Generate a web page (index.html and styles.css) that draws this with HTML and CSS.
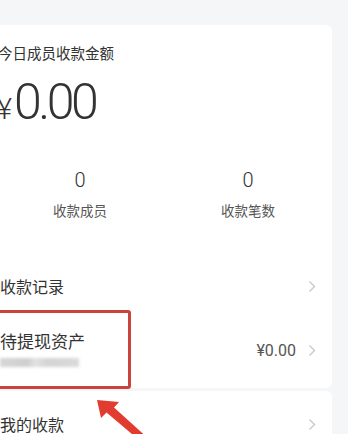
FILE: index.html
```html
<!DOCTYPE html>
<html lang="zh">
<head>
<meta charset="utf-8">
<link rel="stylesheet" href="styles.css">
</head>
<body>
<div class="page">
  <section class="card card-main">
    <div class="title">今日成员收款金额</div>
    <div class="amount"><span class="yen">¥</span><span class="num">0.00</span></div>
    <div class="stats">
      <div class="stat"><div class="stat-num">0</div><div class="stat-label">收款成员</div></div>
      <div class="stat"><div class="stat-num">0</div><div class="stat-label">收款笔数</div></div>
    </div>
    <div class="row row-record">
      <span class="row-label">收款记录</span>
      <svg class="chev" width="8" height="13" viewBox="0 0 8 13"><polyline points="1.5,1.5 6.5,6.5 1.5,11.5" fill="none" stroke="#c9c9c9" stroke-width="1.4"/></svg>
    </div>
    <div class="row row-asset">
      <div class="asset-left">
        <span class="asset-label">待提现资产</span>
        <span class="blur-bar"></span>
      </div>
      <div class="asset-right">
        <span class="asset-value">¥0.00</span>
        <svg class="chev" width="8" height="13" viewBox="0 0 8 13"><polyline points="1.5,1.5 6.5,6.5 1.5,11.5" fill="none" stroke="#c9c9c9" stroke-width="1.4"/></svg>
      </div>
      <div class="highlight"></div>
    </div>
  </section>
  <section class="card card-second">
    <div class="row row-mine">
      <span class="row-label">我的收款</span>
      <svg class="chev" width="8" height="13" viewBox="0 0 8 13"><polyline points="1.5,1.5 6.5,6.5 1.5,11.5" fill="none" stroke="#c9c9c9" stroke-width="1.4"/></svg>
    </div>
  </section>
</div>
<svg class="arrow" width="70" height="50" viewBox="0 0 70 50">
  <polygon points="9,10 31,12 26,17.5 62,50 51,50 18.5,22.5 13,28" fill="#e23b30"/>
</svg>
</body>
</html>
```
FILE: styles.css
```css
html, body {
  margin: 0;
  padding: 0;
}
body {
  background: #f5f6f8;
  width: 348px;
  height: 434px;
  overflow: hidden;
  position: relative;
  font-family: Roboto, "Noto Sans CJK SC", sans-serif;
  color: #333;
}
.page {
  padding-top: 25px;
  display: flex;
  flex-direction: column;
  gap: 3px;
}
.card {
  background: #fff;
  width: 332px;
  border-radius: 0 6px 6px 0;
}
.card-main {
  padding-top: 18px;
}
.title {
  font-family: "Noto Sans CJK SC", sans-serif;
  font-size: 14.5px;
  line-height: 20px;
  margin-left: -2px;
  color: #333;
}
.amount {
  margin-top: 14px;
  height: 50px;
  display: flex;
  align-items: baseline;
  line-height: 50px;
  color: #333;
}
.yen {
  font-size: 29px;
  font-weight: 300;
  margin-left: -3px;
  margin-right: 2px;
}
.num {
  font-size: 50px;
  font-weight: 300;
  letter-spacing: -3.5px;
}
.stats {
  margin-top: 43px;
  margin-left: -4px;
  display: grid;
  grid-template-columns: 168px 168px;
}
.stat {
  display: flex;
  flex-direction: column;
  align-items: center;
}
.stat-num {
  font-size: 20px;
  font-weight: 300;
  line-height: 20px;
  color: #333;
}
.stat-label {
  margin-top: 11px;
  font-family: "Noto Sans CJK SC", sans-serif;
  font-size: 13.5px;
  line-height: 18px;
  color: #555;
}
.row {
  display: flex;
  align-items: center;
  justify-content: space-between;
  padding-right: 16px;
  position: relative;
}
.row-record {
  margin-top: 42px;
  height: 50px;
}
.row-label {
  font-family: "Noto Sans CJK SC", sans-serif;
  font-size: 16px;
  color: #333;
}
.row-asset {
  height: 77px;
}
.asset-left {
  display: flex;
  flex-direction: column;
  gap: 6px;
  margin-top: -3px;
}
.asset-label {
  font-family: "Noto Sans CJK SC", sans-serif;
  font-size: 17px;
  line-height: 22px;
  color: #333;
}
.blur-bar {
  width: 79px;
  height: 9px;
  background: linear-gradient(90deg, #d6d6d6 0%, #cfcfcf 35%, #e2e2e2 45%, #d4d4d4 60%, #dadada 100%);
  filter: blur(1.5px);
}
.asset-right {
  display: flex;
  align-items: center;
  gap: 12px;
  margin-top: 1px;
}
.asset-value {
  font-size: 16px;
  color: #555;
}
.highlight {
  position: absolute;
  left: -6px;
  top: -1px;
  width: 131px;
  height: 73px;
  border: 3px solid #c8443d;
  border-radius: 3px;
}
.row-mine {
  height: 66px;
}
.arrow {
  position: absolute;
  left: 88px;
  top: 390px;
}
```
